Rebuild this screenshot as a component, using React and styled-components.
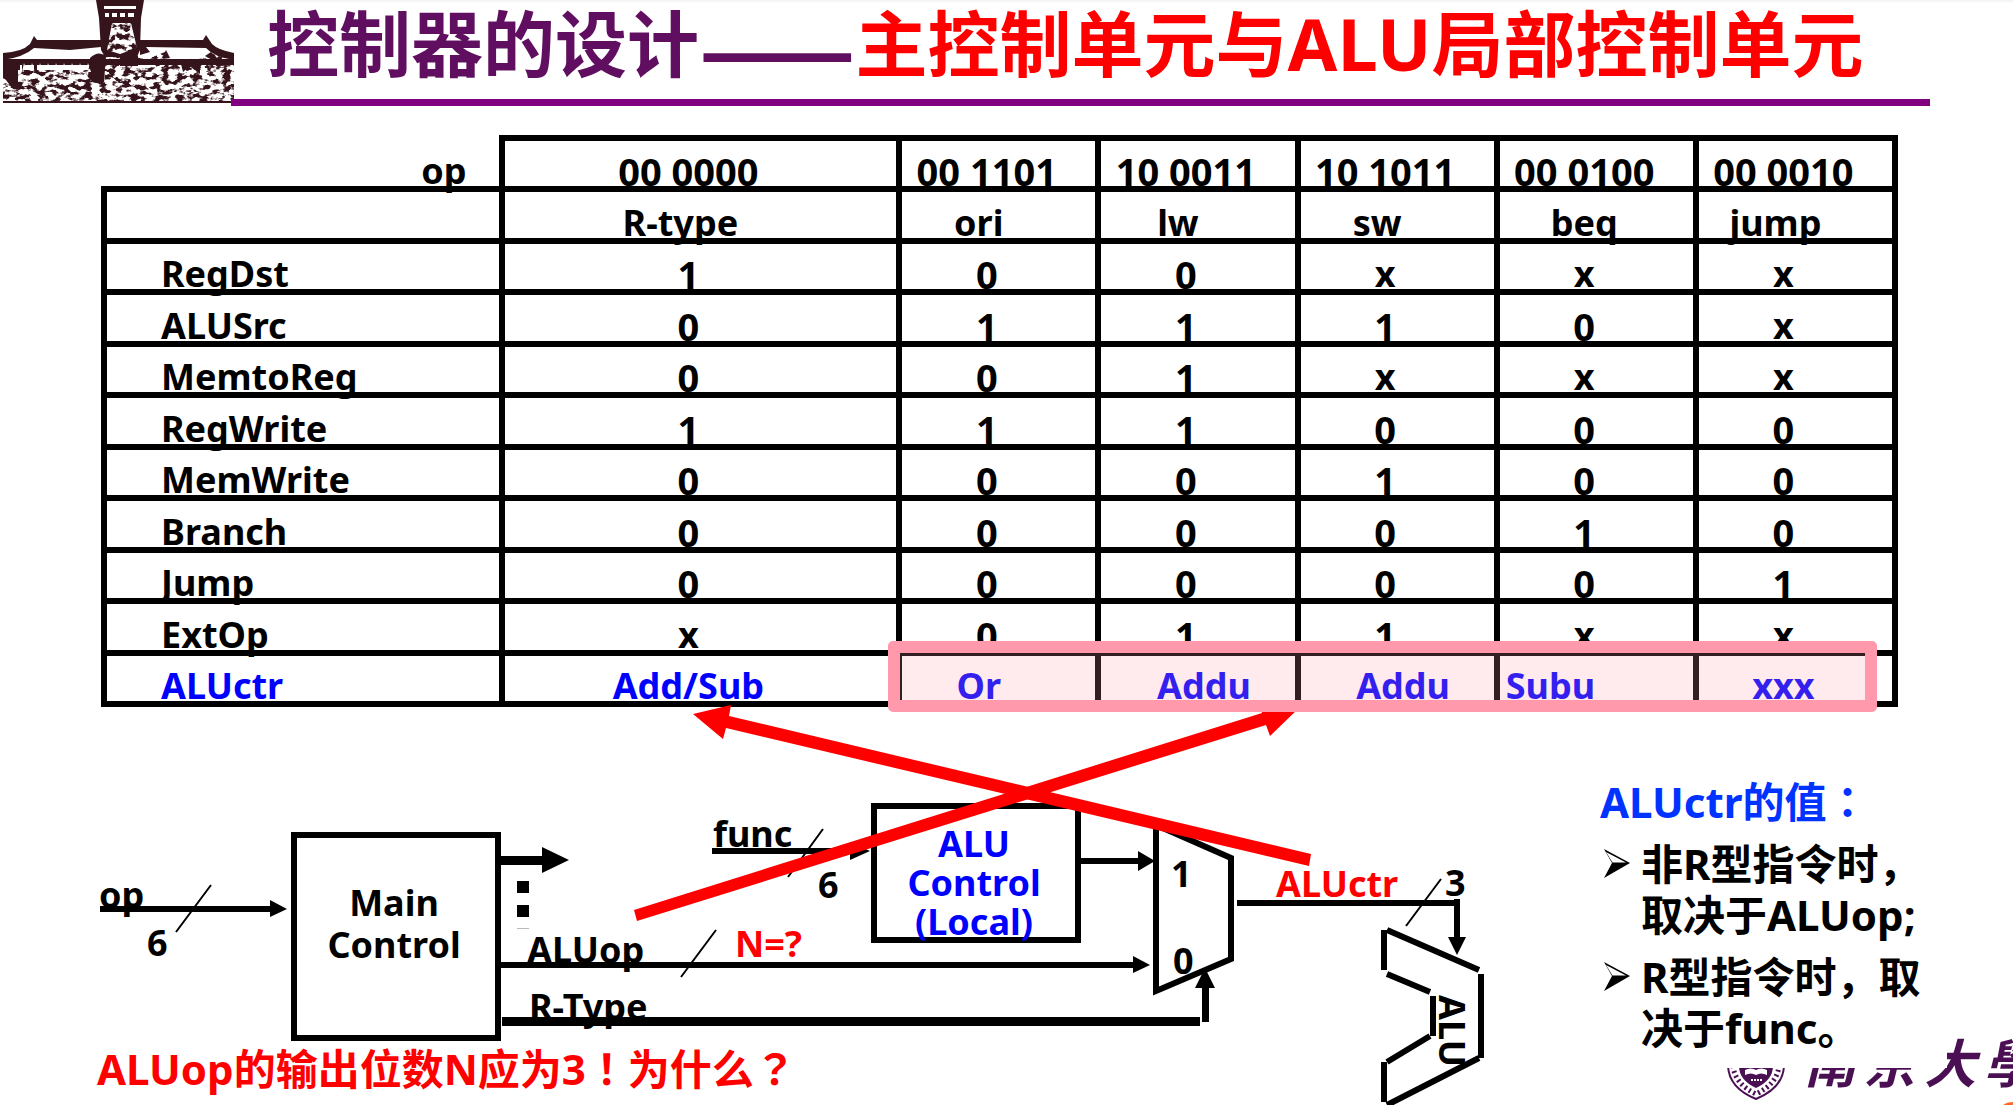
import React from "react";
import styled, { createGlobalStyle } from "styled-components";

const INK = "#000000";
const BLUE = "#0000ff";
const RED = "#ff0000";
const LATIN = '"Noto Sans", "Noto Sans CJK SC", sans-serif';
const HAN = '"Noto Sans CJK SC", "Noto Sans", sans-serif';

const GlobalStyle = createGlobalStyle`
  *, *::before, *::after { box-sizing: border-box; }
  body {
    margin: 0;
    background: #ffffff;
    color: ${INK};
    font-family: ${LATIN};
    font-weight: 700;
    font-size: 36px;
    line-height: 36px;
  }
`;

const Slide = styled.main`
  position: relative;
  overflow: hidden;
  min-height: 100vh;
  background: linear-gradient(#f2f2f2, #ffffff 3px);
`;

/* ---------- header ---------- */

const Header = styled.header`
  display: flex;
  padding-right: 83px;
`;

const Building = styled.svg`
  flex: none;
  width: 231px;
  height: 106px;
  overflow: visible;
`;

const Title = styled.h1`
  flex: 1;
  display: flex;
  align-items: center;
  height: 106px;
  margin: 0;
  padding: 0 0 12px 36px;
  border-bottom: 7px solid #800080;
  font-size: 72px;
  line-height: 87px;
  white-space: nowrap;
  color: #600f60;
`;

const Dash = styled.span`
  font-family: ${HAN};
  font-size: 92px;
`;

const Accent = styled.span`
  color: ${RED};
`;

/* full-width marks that sit in the middle of their square */
const Mark = styled.span`
  font-family: "Noto Sans CJK JP", sans-serif;
  line-height: 0;
`;

/* ---------- truth table ---------- */

const TableArea = styled.section`
  position: relative;
  margin: 29px 115px 0 101px;
`;

const Table = styled.table`
  width: 100%;
  height: 572px;
  table-layout: fixed;
  border-collapse: collapse;
`;

const Col = styled.col`
  width: ${(p) => (p.$wide ? "22.2%" : "auto")};
`;

const pads = {
  normal: "0 24px 0 0",
  far: "0 40px 0 0",
  lead: "0 0 0 12px",
  start: "0 0 0 6px",
};

const Cell = styled.td`
  padding: ${(p) => pads[p.$pad || "normal"]};
  border: 6px solid ${INK};
  text-align: ${(p) => (p.$pad === "start" ? "left" : "center")};
  vertical-align: bottom;
  font-size: ${(p) => (p.$numeric ? 38 : 36)}px;
  font-weight: 700;
  line-height: 30px;
  color: ${(p) => (p.$blue ? BLUE : INK)};
`;

const RowHead = styled(Cell).attrs({ as: "th", scope: "row" })`
  padding: 0 0 0 54px;
  text-align: left;
`;

const Corner = styled(Cell).attrs({ as: "th", scope: "row" })`
  padding: 0 32px 0 0;
  border-top: none;
  border-left: none;
  text-align: right;
`;

const Highlight = styled.div`
  position: absolute;
  z-index: 2;
  left: calc(44% - 4px);
  right: 21px;
  bottom: -5px;
  height: 71px;
  border: 12px solid #ff99ab;
  border-radius: 5px;
  background: rgba(255, 153, 171, 0.2);
  background-clip: padding-box;
`;

/* ---------- lower half ---------- */

const Lower = styled.section`
  display: flex;
  align-items: flex-start;
  padding-right: 66px;
`;

const Diagram = styled.div`
  position: relative;
  flex: 1;
  height: 398px;
`;

const Wires = styled.svg`
  position: absolute;
  left: 0;
  top: 0;
  width: 1600px;
  height: 398px;
  overflow: visible;
`;

const Block = styled.div`
  position: absolute;
  left: ${(p) => p.$x}px;
  top: ${(p) => p.$y}px;
  width: 210px;
  height: ${(p) => p.$h}px;
  padding: ${(p) => p.$top}px 4px 0 0;
  border: 6px solid ${INK};
  text-align: center;
  line-height: ${(p) => p.$line}px;
  color: ${(p) => p.$color || INK};
`;

const Label = styled.span`
  position: absolute;
  left: ${(p) => p.$x}px;
  top: ${(p) => p.$y}px;
  white-space: nowrap;
  color: ${(p) => p.$color || INK};
  writing-mode: ${(p) => (p.$vertical ? "vertical-rl" : "horizontal-tb")};
`;

const Question = styled.p`
  position: absolute;
  left: 97px;
  top: 336px;
  margin: 0;
  font-size: 42px;
  line-height: 51px;
  white-space: nowrap;
  color: ${RED};
`;

const Notes = styled.aside`
  position: relative;
  z-index: 1;
  flex: none;
  width: 347px;
  padding: 69px 20px 15px 0;
  background: #ffffff;
  font-size: 42px;
  line-height: 51px;
`;

const NotesTitle = styled.h2`
  margin: 0 0 11px;
  font-size: 42px;
  line-height: 51px;
  color: #0033ff;
`;

const NoteList = styled.ul`
  display: grid;
  gap: 11px;
  margin: 0;
  padding: 0;
  list-style: none;
`;

const Note = styled.li`
  display: grid;
  grid-template-columns: 41px 286px;
`;

const Bullet = styled.svg`
  width: 32px;
  height: 51px;
`;

/* ---------- university mark ---------- */

const Brand = styled.div`
  position: absolute;
  right: 0;
  bottom: 0;
  display: flex;
  align-items: flex-end;
  width: 288px;
  height: 85px;
  overflow: hidden;
  color: #4b1054;
`;

const Shield = styled.svg`
  flex: none;
  width: 62px;
  height: 85px;
`;

const BrandText = styled.div`
  flex: none;
  width: 240px;
  height: 85px;
  margin-left: 17px;
`;

const BrandName = styled.div`
  display: flex;
  gap: 8px;
  font-family: ${HAN};
  font-size: 52px;
  line-height: 82px;
  font-style: italic;
  white-space: nowrap;
`;

const BrandLatin = styled.div`
  font-family: "Liberation Sans", sans-serif;
  font-size: 20px;
  line-height: 20px;
  white-space: nowrap;
`;

const Spark = styled.svg`
  position: absolute;
  right: 0;
  bottom: 0;
  width: 10px;
  height: 3px;
`;

/* ---------- data ---------- */

const OPCODES = ["00 0000", "00 1101", "10 0011", "10 1011", "00 0100", "00 0010"];

const MNEMONICS = [
  ["R-type", "far"],
  ["ori", "far"],
  ["lw", "far"],
  ["sw", "far"],
  ["beq", "normal"],
  ["jump", "far"],
];

const SIGNALS = [
  ["RegDst", "100xxx"],
  ["ALUSrc", "01110x"],
  ["MemtoReg", "001xxx"],
  ["RegWrite", "111000"],
  ["MemWrite", "000100"],
  ["Branch", "000010"],
  ["Jump", "000001"],
  ["ExtOp", "x011xx"],
];

const ALUCTR = [
  ["Add/Sub", "normal"],
  ["Or", "far"],
  ["Addu", "lead"],
  ["Addu", "lead"],
  ["Subu", "start"],
  ["xxx", "normal"],
];

const LABELS = [
  { text: "op", x: 99, y: 170 },
  { text: "6", x: 147, y: 218 },
  { text: "ALUop", x: 527, y: 225 },
  { text: "R-Type", x: 529, y: 282 },
  { text: "func", x: 713, y: 109 },
  { text: "6", x: 818, y: 160 },
  { text: "N=?", x: 735, y: 219, color: RED },
  { text: "1", x: 1171, y: 149 },
  { text: "0", x: 1173, y: 236 },
  { text: "ALUctr", x: 1276, y: 159, color: RED },
  { text: "3", x: 1445, y: 158 },
  { text: "ALU", x: 1434, y: 288, vertical: true },
];

/* ---------- drawings ---------- */

function BuildingArt() {
  const teeth = [];
  for (let x = 22; x < 92; x += 8) teeth.push(x);
  return (
    <Building viewBox="0 0 231 106" aria-hidden="true">
      <defs>
        <filter id="foliage" x="0" y="0" width="100%" height="100%" colorInterpolationFilters="sRGB">
          <feTurbulence type="fractalNoise" baseFrequency="0.13 0.2" numOctaves="3" seed="11" />
          <feColorMatrix values="0 0 0 0 0.21  0 0 0 0 0.08  0 0 0 0 0.11  7 0 0 0 -3.2" />
          <feComposite in2="SourceGraphic" operator="in" />
        </filter>
      </defs>
      <g fill="#35141c">
        <path d="M96 0 L99 18 L101 50 L105 57 L137 57 L140 50 L141 18 L144 0 Z" />
        <path d="M34 36 L37 40 L101 40 L101 47 L70 50 L34 48 Q24 57 3 60 L3 53 Q22 52 30 44 Z" />
        <path d="M206 35 L203 40 L140 40 L140 55 L150 52 L146 47 L206 48 Q214 57 234 60 L234 53 Q218 50 212 44 Z" />
        <path d="M3 59 H234 V65 H3 Z" />
        <path d="M3 62 H20 V70 H18 V84 L12 88 L3 76 Z" />
        <path d="M90 58 Q98 50 106 56 L104 82 Q92 86 88 76 Z" />
        <path d="M120 55 Q130 50 138 56 V66 H120 Z M162 58 L166 50 L170 58 Z M180 60 H200 V74 L190 66 L183 72 Z" />
        <path d="M22 65 h3 v8 h-3 Z M34 65 h3 v8 h-3 Z M205 56 l6 -4 l8 8 l8 0 l-4 6 Z" />
        <path d="M3 101 H234 V103 H3 Z" />
      </g>
      <g fill="#ffffff">
        <path d="M104 6 H136 V9 H104 Z M105 13 H109 V17 H105 Z M112 13 H117 V17 H112 Z M120 13 H125 V17 H120 Z M128 13 H134 V17 H128 Z" />
        <path d="M112 23 H131 L137 48 L120 54 L107 50 Z" />
        {teeth.map((x) => (
          <path key={x} d={`M${x} 72 L${x + 2} 63 L${x + 5} 72 Z`} />
        ))}
      </g>
      <g filter="url(#foliage)">
        <path d="M3 70 H88 L92 60 L110 56 L150 58 L165 52 L175 60 L205 58 L214 54 L234 62 V103 H3 Z" fill="#000" />
        <path d="M106 21 H134 L138 57 H103 Z" fill="#000" />
      </g>
    </Building>
  );
}

function BulletArt() {
  return (
    <Bullet viewBox="0 0 32 51" aria-hidden="true">
      <path d="M4 11 L30 25 L4 40 L12 25 Z" fill="#000" />
      <path d="M6 14 L26 24.500 L12.500 24.500 Z" fill="#fff" />
    </Bullet>
  );
}

function WireArt() {
  return (
    <Wires viewBox="0 707 1600 398" aria-hidden="true">
      <g fill={INK}>
        <path d="M100 906 H270 V900 L287 909 L270 917 V912 H100 Z" />
        <path d="M500 856 H542 V847 L569 860 L542 873 V865 H500 Z" />
        <path d="M517 881 H529 V893 H517 Z M517 905 H529 V917 H517 Z" />
        <path d="M517 928 H529 V929 H517 Z" fill="#bbbbbb" />
        <path d="M500 962 H1133 V956 L1150 965 L1133 973 V968 H500 Z" />
        <path d="M502 1017 H1200 V1026 H502 Z" />
        <path d="M1202 1022 V988 H1195 L1205 968 L1215 988 H1209 V1022 Z" />
        <path d="M712 848 H850 V842 L870 851 L850 860 V854 H712 Z" />
        <path d="M1080 858 H1138 V851 L1155 861 L1138 871 V864 H1080 Z" />
        <path d="M1237 900 H1454 V899 H1460 V937 H1466 L1457 955 L1448 937 H1454 V906 H1237 Z" />
      </g>
      <g fill="none" stroke={INK} strokeWidth="2">
        <path d="M176 932 L211 885 M681 977 L716 930 M788 877 L823 829 M1406 926 L1441 879" />
      </g>
      <g fill="none" stroke={INK} strokeWidth="6">
        <path d="M1156 825 L1231 858 V959 L1156 991 Z" />
        <path d="M1384 930 V970 M1387 930 L1479 970 M1481 974 V1058 M1387 974 L1430 992 M1433 996 V1036 M1430 1036 L1387 1062 M1384 1062 V1102 M1479 1058 L1387 1105" />
      </g>
    </Wires>
  );
}

function CrossArrows() {
  return (
    <Wires viewBox="0 707 1600 398" aria-hidden="true">
      <g fill={RED}>
        <path d="M693 714 L731 705 L729 716 L1311 854 L1309 866 L726 728 L723 739 Z" />
        <path d="M1299 708 L1259 702 L1262 713 L634 910 L637 921 L1266 725 L1270 736 Z" />
      </g>
    </Wires>
  );
}

function ShieldArt() {
  return (
    <Shield viewBox="0 0 62 85" aria-hidden="true">
      <path d="M3 10 H59 V46 Q58 68 31 79 Q4 68 3 46 Z" fill="#ffffff" stroke="#4b1054" strokeWidth="2" />
      <path d="M14 20 H48 V46 Q48 60 31 68 Q14 60 14 46 Z" fill="#4b1054" />
      <path d="M20 50 Q26 47 31 50 Q36 47 42 50 V55 Q36 52 31 55 Q26 52 20 55 Z" fill="#ffffff" />
      <path d="M26 60 H37" stroke="#ffffff" strokeWidth="2" strokeDasharray="2 1" />
      <path d="M8 46 Q10 64 31 74 Q52 64 54 46" fill="none" stroke="#4b1054" strokeWidth="5" strokeDasharray="2 3" />
    </Shield>
  );
}

/* ---------- page ---------- */

export default function App() {
  return (
    <>
      <GlobalStyle />
      <Slide>
        <Header>
          <BuildingArt />
          <Title>
            <span>控制器的设计</span>
            <Dash>——</Dash>
            <Accent>主控制单元与ALU局部控制单元</Accent>
          </Title>
        </Header>

        <TableArea>
          <Table>
            <colgroup>
              <Col $wide />
              <Col $wide />
              <Col />
              <Col />
              <Col />
              <Col />
              <Col />
            </colgroup>
            <tbody>
              <tr>
                <Corner>op</Corner>
                {OPCODES.map((code) => (
                  <Cell key={code} $numeric>{code}</Cell>
                ))}
              </tr>
              <tr>
                <Cell />
                {MNEMONICS.map(([name, pad]) => (
                  <Cell key={name} $pad={pad}>{name}</Cell>
                ))}
              </tr>
              {SIGNALS.map(([name, bits]) => (
                <tr key={name}>
                  <RowHead>{name}</RowHead>
                  {[...bits].map((bit, i) => (
                    <Cell key={i} $numeric={bit !== "x"}>{bit}</Cell>
                  ))}
                </tr>
              ))}
              <tr>
                <RowHead $blue>ALUctr</RowHead>
                {ALUCTR.map(([value, pad], i) => (
                  <Cell key={i} $blue $pad={pad}>{value}</Cell>
                ))}
              </tr>
            </tbody>
          </Table>
          <Highlight />
        </TableArea>

        <Lower>
          <Diagram>
            <Block $x={291} $y={125} $h={209} $top={44} $line={42}>
              Main<br />Control
            </Block>
            <Block $x={871} $y={96} $h={140} $top={15} $line={39} $color={BLUE}>
              ALU<br />Control<br />(Local)
            </Block>
            <WireArt />
            {LABELS.map((l, i) => (
              <Label key={i} $x={l.x} $y={l.y} $color={l.color} $vertical={l.vertical}>
                {l.text}
              </Label>
            ))}
            <CrossArrows />
            <Question>
              ALUop的输出位数N应为3<Mark>！</Mark>为什么<Mark>？</Mark>
            </Question>
          </Diagram>
          <Notes>
            <NotesTitle>
              ALUctr的值<Mark>：</Mark>
            </NotesTitle>
            <NoteList>
              <Note>
                <BulletArt />
                <span>非R型指令时，取决于ALUop;</span>
              </Note>
              <Note>
                <BulletArt />
                <span>R型指令时，取决于func。</span>
              </Note>
            </NoteList>
          </Notes>
        </Lower>

        <Brand>
          <ShieldArt />
          <BrandText>
            <BrandName>
              <span>南</span>
              <span>京</span>
              <span>大</span>
              <span>學</span>
            </BrandName>
            <BrandLatin>NANJING UNIVERSITY</BrandLatin>
          </BrandText>
          <Spark viewBox="0 0 10 3" aria-hidden="true">
            <path d="M0 3 Q4 0 10 0 V3 Z" fill="#ff6a2a" />
          </Spark>
        </Brand>
      </Slide>
    </>
  );
}
